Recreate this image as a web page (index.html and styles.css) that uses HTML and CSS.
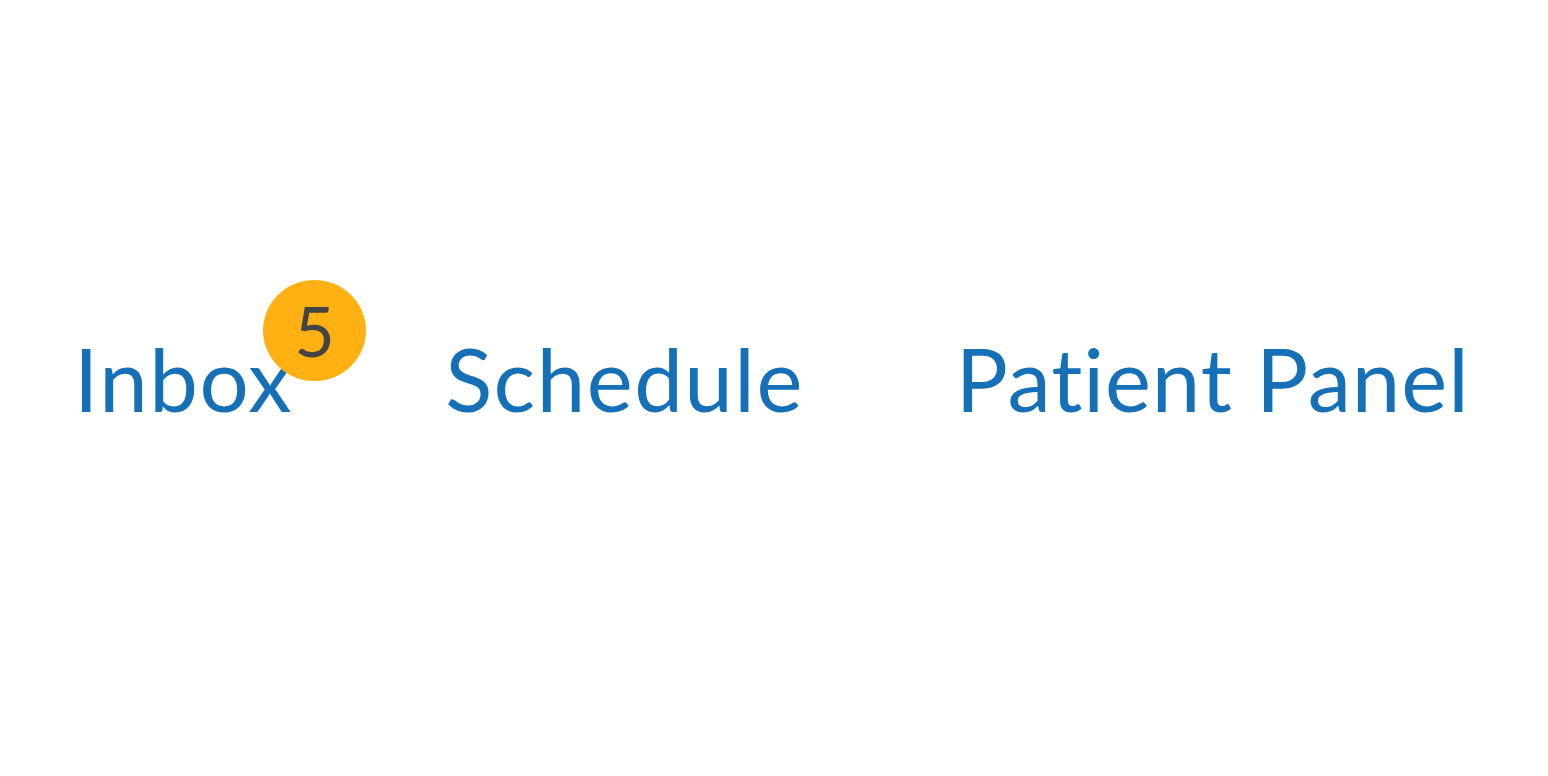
FILE: index.html
```html
<!DOCTYPE html>
<html lang="en">
<head>
<meta charset="utf-8">
<title>Nav</title>
<link rel="stylesheet" href="styles.css">
</head>
<body>
<nav class="nav">
  <a class="nav-item inbox" href="#">Inbox<span class="badge">5</span></a>
  <a class="nav-item" href="#">Schedule</a>
  <a class="nav-item panel" href="#">Patient Panel</a>
</nav>
</body>
</html>
```

FILE: styles.css
```css
html, body {
  margin: 0;
  padding: 0;
  background: #ffffff;
}
body {
  font-family: "Lato", "Noto Sans", sans-serif;
  font-variant-ligatures: none;
  font-feature-settings: "liga" 0;
}
.nav {
  height: 776px;
  display: flex;
  align-items: center;
  padding-left: 74px;
  padding-bottom: 20px;
  gap: 152px;
  box-sizing: border-box;
}
.nav-item {
  position: relative;
  color: #1570b8;
  text-decoration: none;
  font-size: 87px;
  letter-spacing: 1.5px;
  line-height: 1;
}
.panel {
  letter-spacing: 0.9px;
}
.badge {
  position: absolute;
  left: calc(100% - 30px);
  top: -55px;
  width: 103px;
  height: 101px;
  border-radius: 50%;
  background: #ffb012;
  color: #444444;
  font-size: 70px;
  letter-spacing: 0;
  line-height: 101px;
  text-align: center;
}
```
